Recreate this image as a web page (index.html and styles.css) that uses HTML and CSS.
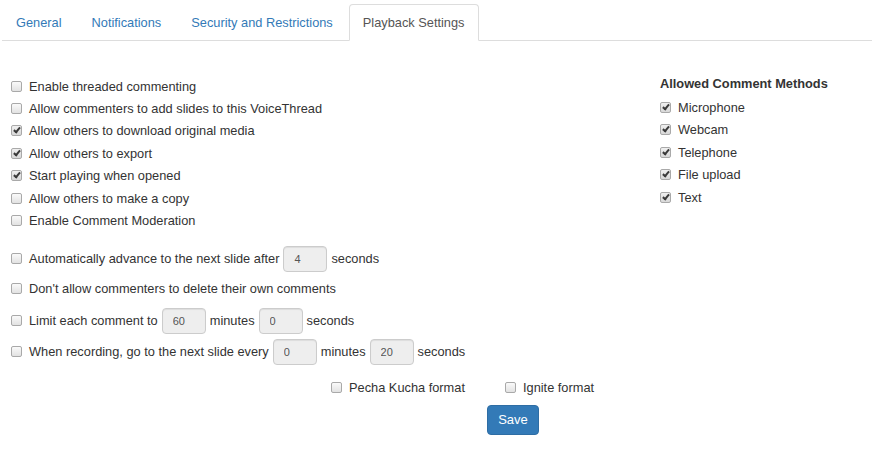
FILE: index.html
```html
<!DOCTYPE html>
<html>
<head>
<meta charset="utf-8">
<link rel="stylesheet" href="styles.css">
</head>
<body>
<ul class="tabs">
  <li class="tab"><a href="#">General</a></li>
  <li class="tab"><a href="#">Notifications</a></li>
  <li class="tab"><a href="#">Security and Restrictions</a></li>
  <li class="tab active"><a href="#">Playback Settings</a></li>
</ul>
<div class="content">
  <div class="columns">
    <div class="left">
      <div class="group">
        <label class="row"><input type="checkbox" class="cb"><span>Enable threaded commenting</span></label>
        <label class="row"><input type="checkbox" class="cb"><span>Allow commenters to add slides to this VoiceThread</span></label>
        <label class="row"><input type="checkbox" class="cb" checked><span>Allow others to download original media</span></label>
        <label class="row"><input type="checkbox" class="cb" checked><span>Allow others to export</span></label>
        <label class="row"><input type="checkbox" class="cb" checked><span>Start playing when opened</span></label>
        <label class="row"><input type="checkbox" class="cb"><span>Allow others to make a copy</span></label>
        <label class="row"><input type="checkbox" class="cb"><span>Enable Comment Moderation</span></label>
      </div>
      <div class="irow r8"><input type="checkbox" class="cb"><span>Automatically advance to the next slide after</span><input class="num" type="text" value="4" disabled><span>seconds</span></div>
      <div class="irow r9"><input type="checkbox" class="cb"><span>Don't allow commenters to delete their own comments</span></div>
      <div class="irow r10"><input type="checkbox" class="cb"><span>Limit each comment to</span><input class="num" type="text" value="60" disabled><span>minutes</span><input class="num" type="text" value="0" disabled><span>seconds</span></div>
      <div class="irow r11"><input type="checkbox" class="cb"><span>When recording, go to the next slide every</span><input class="num" type="text" value="0" disabled><span>minutes</span><input class="num" type="text" value="20" disabled><span>seconds</span></div>
    </div>
    <div class="right">
      <div class="heading">Allowed Comment Methods</div>
      <label class="row rrow"><input type="checkbox" class="cb" checked><span>Microphone</span></label>
      <label class="row rrow"><input type="checkbox" class="cb" checked><span>Webcam</span></label>
      <label class="row rrow"><input type="checkbox" class="cb" checked><span>Telephone</span></label>
      <label class="row rrow"><input type="checkbox" class="cb" checked><span>File upload</span></label>
      <label class="row rrow"><input type="checkbox" class="cb" checked><span>Text</span></label>
    </div>
  </div>
  <div class="formats">
    <label class="row fmt pecha"><input type="checkbox" class="cb"><span>Pecha Kucha format</span></label>
    <label class="row fmt ignite"><input type="checkbox" class="cb"><span>Ignite format</span></label>
  </div>
  <div class="actions"><button class="save">Save</button></div>
</div>
</body>
</html>
```

FILE: styles.css
```css
html, body {
  margin: 0;
  padding: 0;
  background: #fff;
  font-family: "Liberation Sans", Arial, Helvetica, sans-serif;
  font-size: 12.8px;
  color: #333;
}

.tabs {
  list-style: none;
  margin: 0 0 0 2px;
  padding: 4px 0 0 0;
  display: flex;
  border-bottom: 1px solid #ddd;
}

.tab {
  margin-right: 2px;
  margin-bottom: -1px;
}

.tab a {
  display: block;
  padding: 10px 13px;
  line-height: 15px;
  border: 1px solid transparent;
  border-radius: 4px 4px 0 0;
  color: #337ab7;
  text-decoration: none;
}

.tab.active a {
  color: #555;
  background: #fff;
  border-color: #ddd;
  border-bottom-color: transparent;
}

.content {
  padding-top: 34px;
}

.columns {
  display: flex;
}

.left {
  flex: 1;
  padding-left: 11px;
}

.right {
  width: 212px;
  margin-top: -1px;
}

.row {
  display: flex;
  align-items: center;
  height: 22.4px;
}

.rrow {
  height: 22.5px;
}

.cb {
  -webkit-appearance: none;
  appearance: none;
  width: 11px;
  height: 11px;
  margin: 0 7px 0 0;
  border: 1px solid #a9a9a9;
  border-radius: 2px;
  background: linear-gradient(#fafafa, #e2e2e2);
  position: relative;
  flex: none;
  box-sizing: border-box;
}

.cb:checked {
  background: linear-gradient(#f0f0f0, #d8d8d8);
}

.cb:checked::after {
  content: "";
  position: absolute;
  left: 3px;
  top: 0px;
  width: 2px;
  height: 5px;
  border: solid #3a3a3a;
  border-width: 0 2px 2px 0;
  transform: rotate(40deg);
}

.irow {
  display: flex;
  align-items: center;
  height: 26px;
}

.r8 { margin-top: 14px; }
.r9 { margin-top: 4px; }
.r10 { margin-top: 6px; }
.r11 { margin-top: 5px; }

.num {
  width: 44px;
  height: 26px;
  box-sizing: border-box;
  margin: 0 4px;
  padding: 0 0 0 10px;
  border: 1px solid #ccc;
  border-radius: 4px;
  background: #eee;
  color: #555;
  font-family: "Liberation Sans", Arial, sans-serif;
  font-size: 11px;
  box-shadow: inset 0 1px 1px rgba(0,0,0,0.075);
}

.heading {
  font-weight: bold;
  line-height: 20px;
  height: 20px;
  margin-bottom: 2px;
}

.formats {
  display: flex;
  margin-top: 13px;
  padding-left: 331px;
}

.fmt { height: 20px; }

.ignite { margin-left: 40px; }

.actions {
  margin-top: 7px;
  padding-left: 487px;
}

.save {
  width: 52px;
  height: 30px;
  background: #337ab7;
  border: 1px solid #2e6da4;
  border-radius: 4px;
  color: #fff;
  font-family: "Liberation Sans", Arial, sans-serif;
  font-size: 13px;
  padding: 0;
}
```
